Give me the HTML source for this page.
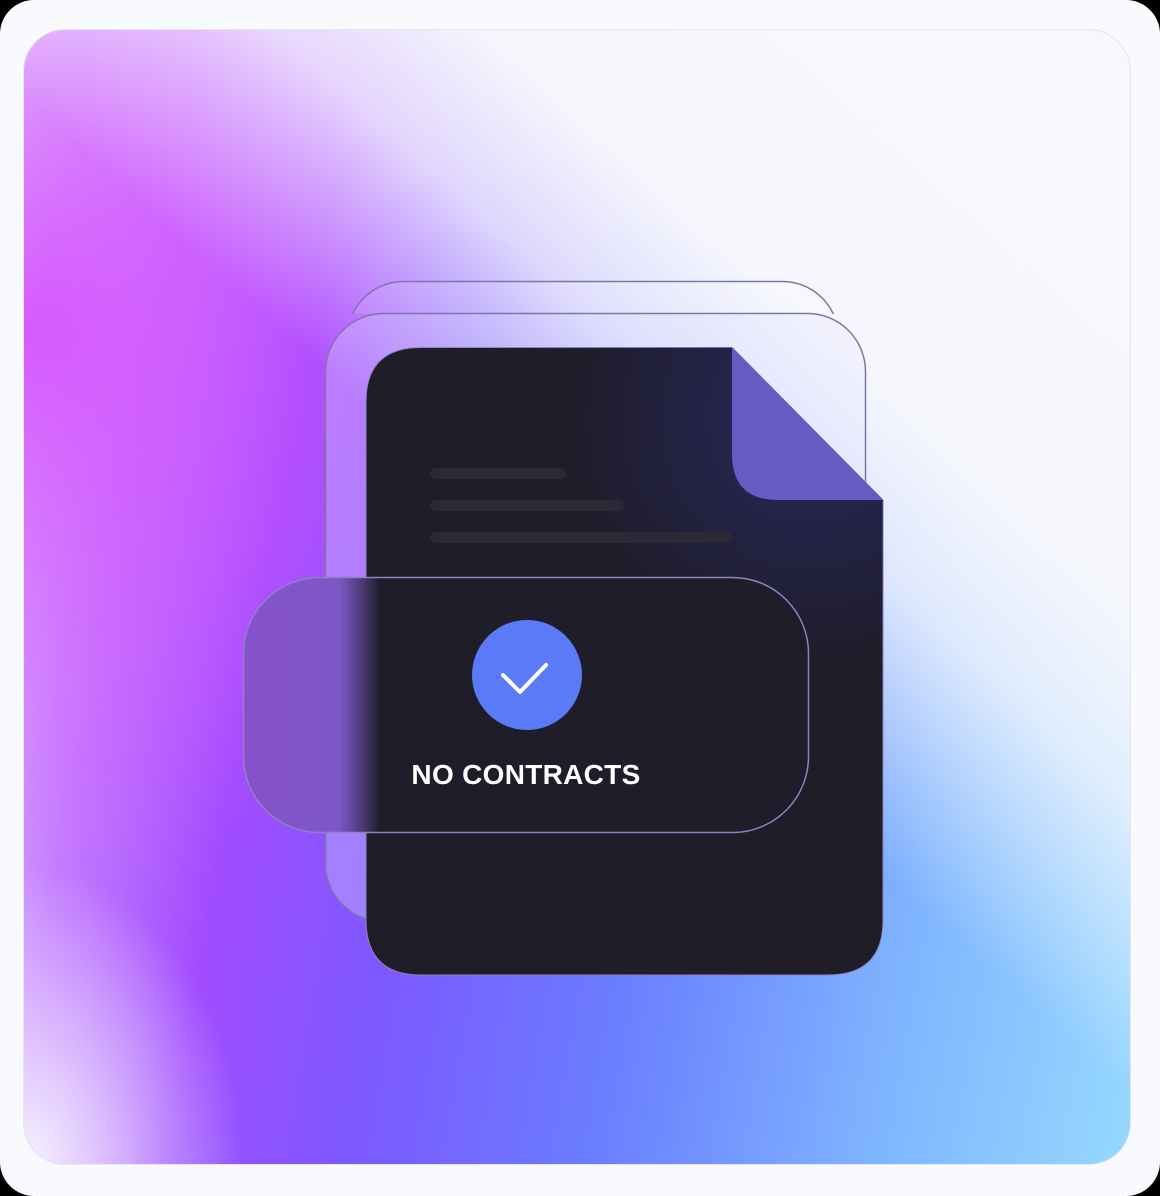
<!DOCTYPE html>
<html><head><meta charset="utf-8"><style>
html,body{margin:0;padding:0;background:#000;}
.page{position:absolute;left:0;top:0;width:1160px;height:1196px;background:#f8fafd;border-radius:34px;overflow:hidden;}
.card{position:absolute;left:23px;top:29px;width:1108px;height:1136px;border-radius:42px;overflow:hidden;border:1px solid #e4e6f2;box-sizing:border-box;}
.bg{position:absolute;inset:0;
background:
linear-gradient(222deg,#f7f8fd 0%,#f6f7fd 27%,rgba(246,247,253,0.8) 36%,rgba(246,247,253,0) 50%),
radial-gradient(ellipse 220px 300px at 0px 1136px,rgba(245,244,253,1),rgba(245,244,253,0) 100%),
radial-gradient(ellipse 420px 560px at 20px 300px,rgba(214,84,255,0.95),rgba(214,84,255,0) 100%),
linear-gradient(100deg,#e6e0fb 0%,#c47cff 14%,#a24cff 26%,#7d58ff 40%,#6a7cff 58%,#7fb4ff 80%,#96d8ff 100%);}
.abs{position:absolute;}
</style></head><body><div class="page">
<div class="card"><div class="bg"></div></div>
<svg class="abs" style="left:0;top:0" width="1160" height="1196" viewBox="0 0 1160 1196">
<defs>
<radialGradient id="glow" cx="810" cy="420" r="250" gradientUnits="userSpaceOnUse">
<stop offset="0" stop-color="#2a2868" stop-opacity="0.85"/><stop offset="1" stop-color="#2a2868" stop-opacity="0"/>
</radialGradient>
<linearGradient id="pillL" x1="243" y1="0" x2="380" y2="0" gradientUnits="userSpaceOnUse">
<stop offset="0" stop-color="#9a5ae8" stop-opacity="0.85"/><stop offset="0.7" stop-color="#8f62e2" stop-opacity="0.85"/><stop offset="1" stop-color="#1e1d29"/>
</linearGradient>
<linearGradient id="shade" x1="0" y1="577" x2="0" y2="640" gradientUnits="userSpaceOnUse">
<stop offset="0" stop-color="#2c2a38"/><stop offset="1" stop-color="#1e1d29" stop-opacity="0"/>
</linearGradient>
<clipPath id="topc"><rect x="300" y="270" width="600" height="44"/></clipPath>
<clipPath id="pillc"><rect x="243.5" y="577.5" width="565" height="255" rx="76"/></clipPath>
</defs>
<rect x="347.5" y="281.5" width="491" height="600" rx="56" fill="rgba(255,255,255,0.12)" stroke="#7d77a8" stroke-width="1.5" clip-path="url(#topc)"/>
<rect x="325.5" y="313.5" width="540" height="608" rx="58" fill="rgba(230,228,255,0.3)" stroke="#7d77a8" stroke-width="1.5"/>
<path d="M421 347.5 H732 L883 500 V920 Q883 975 828 975 H421 Q366 975 366 920 V402 Q366 347.5 421 347.5 Z" fill="#1e1d28" stroke="#8a84c0" stroke-width="1"/>
<path d="M421 347.5 H732 L883 500 V920 Q883 975 828 975 H421 Q366 975 366 920 V402 Q366 347.5 421 347.5 Z" fill="url(#glow)"/>
<path d="M732 347 L883 500 H778 Q732 500 732 454 Z" fill="#655bc3"/>
<rect x="430" y="468" width="136" height="11" rx="5.5" fill="#2a2935"/>
<rect x="430" y="500" width="194" height="11" rx="5.5" fill="#2a2935"/>
<rect x="430" y="532" width="302" height="11" rx="5.5" fill="#2a2935"/>
<rect x="243.5" y="577.5" width="565" height="255" rx="76" fill="#1e1d29"/>
<rect x="370" y="577" width="380" height="60" fill="url(#shade)" clip-path="url(#pillc)"/>
<rect x="243.5" y="577.5" width="565" height="255" rx="76" fill="url(#pillL)"/>
<rect x="243.5" y="577.5" width="565" height="255" rx="76" fill="none" stroke="#8a84c0" stroke-width="1.5"/>
<circle cx="527" cy="675" r="55" fill="#5a7af8"/>
<path d="M503 675 L520 692 L546 665" fill="none" stroke="#fff" stroke-width="4" stroke-linecap="round" stroke-linejoin="round"/>
<text x="526" y="784" text-anchor="middle" font-family="Liberation Sans, sans-serif" font-weight="bold" font-size="28" letter-spacing="0.3" fill="#fff">NO CONTRACTS</text>
</svg>
</div></body></html>
